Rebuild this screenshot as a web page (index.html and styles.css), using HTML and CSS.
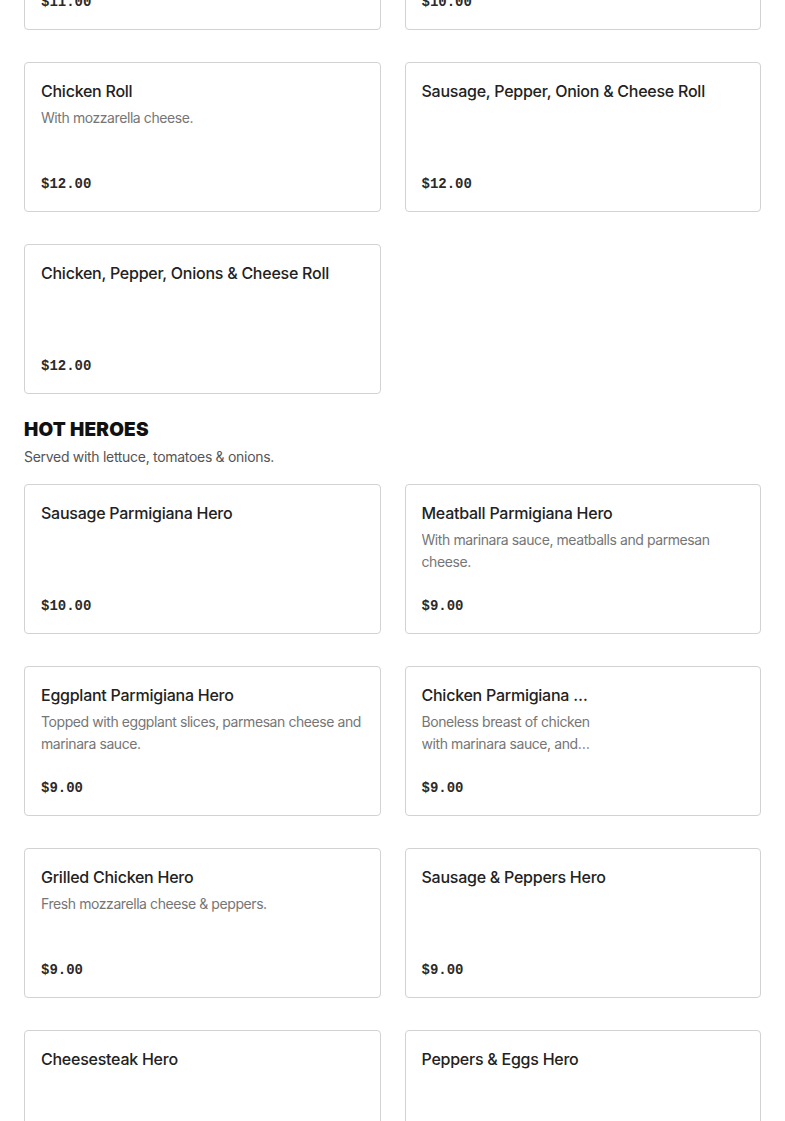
FILE: index.html
```html
<!DOCTYPE html>
<html lang="en">
<head>
<meta charset="utf-8">
<title>Menu</title>
<link rel="stylesheet" href="styles.css">
</head>
<body>
<main class="menu">
  <div class="grid">
    <div class="card">
      <div class="info">
        <div class="title">Sausage Roll</div>
        <div class="desc"></div>
        <div class="price">$11.00</div>
      </div>
    </div>
    <div class="card">
      <div class="info">
        <div class="title">Meatball Roll</div>
        <div class="desc"></div>
        <div class="price">$10.00</div>
      </div>
    </div>
    <div class="card">
      <div class="info">
        <div class="title">Chicken Roll</div>
        <div class="desc">With mozzarella cheese.</div>
        <div class="price">$12.00</div>
      </div>
    </div>
    <div class="card">
      <div class="info">
        <div class="title">Sausage, Pepper, Onion &amp; Cheese Roll</div>
        <div class="desc"></div>
        <div class="price">$12.00</div>
      </div>
    </div>
    <div class="card">
      <div class="info">
        <div class="title">Chicken, Pepper, Onions &amp; Cheese Roll</div>
        <div class="desc"></div>
        <div class="price">$12.00</div>
      </div>
    </div>
  </div>

  <section class="section">
    <h2 class="section-title">HOT HEROES</h2>
    <p class="section-sub">Served with lettuce, tomatoes &amp; onions.</p>
  </section>

  <div class="grid">
    <div class="card">
      <div class="info">
        <div class="title">Sausage Parmigiana Hero</div>
        <div class="desc"></div>
        <div class="price">$10.00</div>
      </div>
    </div>
    <div class="card">
      <div class="info">
        <div class="title">Meatball Parmigiana Hero</div>
        <div class="desc">With marinara sauce, meatballs and parmesan cheese.</div>
        <div class="price">$9.00</div>
      </div>
    </div>
    <div class="card">
      <div class="info">
        <div class="title">Eggplant Parmigiana Hero</div>
        <div class="desc">Topped with eggplant slices, parmesan cheese and marinara sauce.</div>
        <div class="price">$9.00</div>
      </div>
    </div>
    <div class="card">
      <div class="info">
        <div class="title">Chicken Parmigiana Hero</div>
        <div class="desc">Boneless breast of chicken with marinara sauce, and melted mozzarella cheese.</div>
        <div class="price">$9.00</div>
      </div>
      <div class="thumb"></div>
    </div>
    <div class="card">
      <div class="info">
        <div class="title">Grilled Chicken Hero</div>
        <div class="desc">Fresh mozzarella cheese &amp; peppers.</div>
        <div class="price">$9.00</div>
      </div>
    </div>
    <div class="card">
      <div class="info">
        <div class="title">Sausage &amp; Peppers Hero</div>
        <div class="desc"></div>
        <div class="price">$9.00</div>
      </div>
    </div>
    <div class="card">
      <div class="info">
        <div class="title">Cheesesteak Hero</div>
        <div class="desc"></div>
        <div class="price">$10.00</div>
      </div>
    </div>
    <div class="card">
      <div class="info">
        <div class="title">Peppers &amp; Eggs Hero</div>
        <div class="desc"></div>
        <div class="price">$9.00</div>
      </div>
    </div>
  </div>
</main>
</body>
</html>
```

FILE: styles.css
```css
* { box-sizing: border-box; }
html, body { margin: 0; padding: 0; background: #fff; }
body {
  font-family: Inter, "Liberation Sans", Arial, sans-serif;
  color: #222;
  overflow: hidden;
}
.menu {
  padding: 0 24px;
  margin-top: -120px;
}
.grid {
  display: grid;
  grid-template-columns: minmax(0, 1fr) minmax(0, 1fr);
  column-gap: 24px;
  row-gap: 32px;
}
.card {
  display: flex;
  gap: 16px;
  border: 1px solid #d2d2d2;
  border-radius: 4px;
  padding: 16px;
  height: 150px;
  background: #fff;
}
.info {
  flex: 1;
  min-width: 0;
  display: flex;
  flex-direction: column;
}
.title {
  font-size: 16px;
  line-height: 24px;
  font-weight: 500;
  color: #222;
  white-space: nowrap;
  overflow: hidden;
  text-overflow: ellipsis;
  letter-spacing: -0.25px;
}
.desc {
  margin-top: 4px;
  font-size: 14px;
  line-height: 22px;
  color: #767676;
  letter-spacing: -0.42px;
  height: 44px;
  overflow: hidden;
  display: -webkit-box;
  -webkit-line-clamp: 2;
  -webkit-box-orient: vertical;
}
.price {
  margin-top: 23px;
  font-family: "Liberation Mono", "DejaVu Sans Mono", monospace;
  font-weight: bold;
  font-size: 14px;
  line-height: 22px;
  color: #2a2a2a;
}
.thumb {
  width: 132px;
  flex-shrink: 0;
}
.section {
  margin: 24px 0 16px;
}
.section-title {
  margin: 0;
  font-family: Inter, "Liberation Sans", sans-serif;
  font-weight: 900;
  font-size: 19px;
  line-height: 24px;
  letter-spacing: 0.2px;
  color: #111;
}
.section-sub {
  margin: 4px 0 0;
  font-size: 14px;
  line-height: 22px;
  color: #555;
  letter-spacing: -0.3px;
}
```
